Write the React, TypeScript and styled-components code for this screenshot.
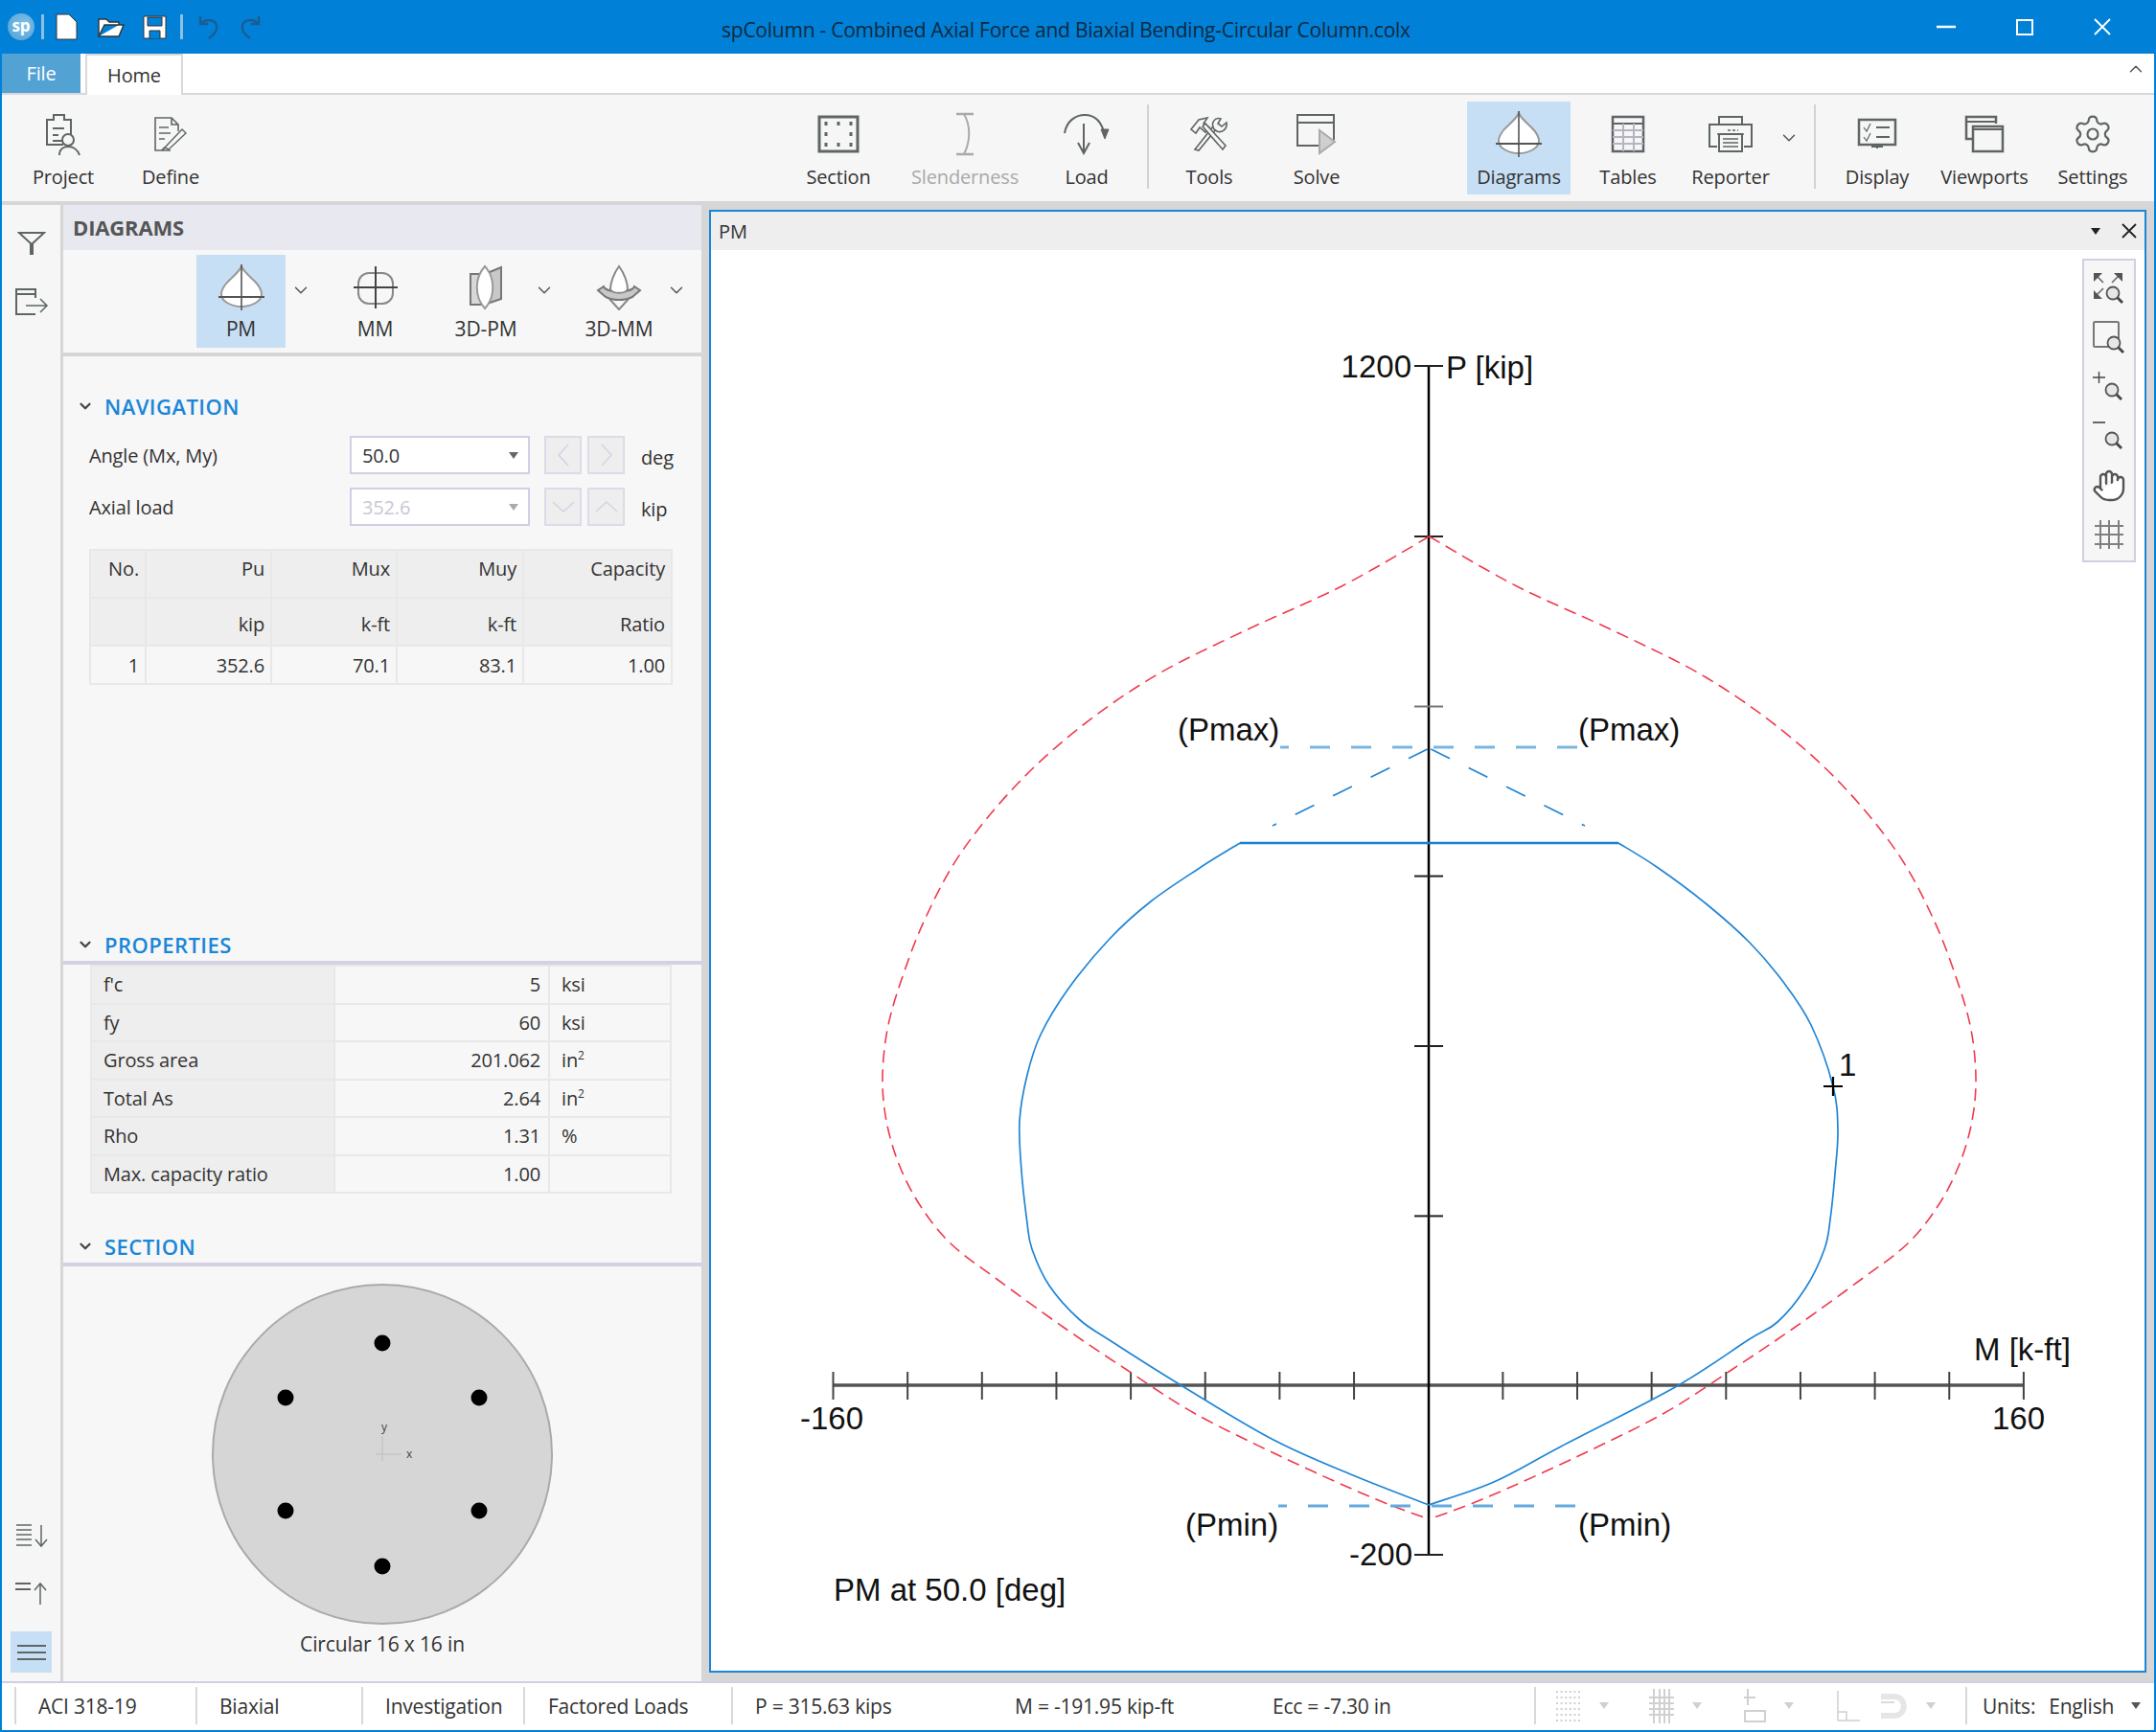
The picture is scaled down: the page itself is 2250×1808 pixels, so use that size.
import styled, { createGlobalStyle } from "styled-components";
import { ChevronDown, ChevronUp, Hand, Settings } from "lucide-react";
import type { ReactNode } from "react";

const GlobalStyle = createGlobalStyle`
  html, body { margin: 0; padding: 0; }
  body { font-family: "Open Sans", "Liberation Sans", sans-serif; color: #333; }
  * { box-sizing: border-box; }
`;

const Frame = styled.div`
  width: 2250px;
  height: 1808px;
  padding: 0 2px 2px;
  background: #0080d7;
  display: flex;
  flex-direction: column;
  overflow: hidden;
  font-size: 20px;
  letter-spacing: -0.15px;
`;

const TitleBar = styled.div`
  height: 56px;
  flex: none;
  display: flex;
  align-items: center;
  background: #0080d7;
`;

const Logo = styled.div`
  width: 28px;
  height: 28px;
  margin-left: 6px;
  border-radius: 50%;
  background: radial-gradient(circle at 60% 40%, #7fc0e8, #4f9fd4);
  color: #fff;
  font-weight: 700;
  font-size: 17px;
  line-height: 26px;
  text-align: center;
`;

const QatSep = styled.div`
  width: 3px;
  height: 26px;
  background: #8fbfe0;
  margin-left: ${(p: { $ml: number }) => p.$ml}px;
`;

const QatIcon = styled.svg<{ $ml: number }>`
  margin-left: ${(p) => p.$ml}px;
  flex: none;
`;

const Title = styled.div`
  margin-left: 480px;
  padding-top: 5px;
  font-size: 21px;
  letter-spacing: -0.24px;
  color: #0e2a40;
  white-space: nowrap;
`;

const WinButtons = styled.div`
  margin-left: auto;
  display: flex;
  align-items: center;
  margin-right: 45px;
  gap: 63px;
`;

const TabRow = styled.div`
  height: 43px;
  flex: none;
  display: flex;
  align-items: flex-start;
  background: #fff;
  border-bottom: 2px solid #d8d8d8;
`;

const FileTab = styled.div`
  width: 82px;
  height: 41px;
  background: #52a2d3;
  color: #fff;
  text-align: center;
  line-height: 41px;
`;

const HomeTab = styled.div`
  width: 102px;
  height: 43px;
  margin-left: 5px;
  background: #fff;
  border: 2px solid #d8d8d8;
  border-bottom: none;
  text-align: center;
  line-height: 41px;
`;

const CollapseBtn = styled.div`
  margin-left: auto;
  margin-right: 8px;
  margin-top: 5px;
  color: #555;
`;

const Ribbon = styled.div`
  height: 111px;
  flex: none;
  display: flex;
  align-items: flex-start;
  padding-top: 7px;
  background: #f6f6f6;
`;

const RibbonBtn = styled.div<{ $w: number; $ml: number; $active?: boolean; $off?: boolean }>`
  width: ${(p) => p.$w}px;
  height: 97px;
  margin-left: ${(p) => p.$ml}px;
  flex: none;
  display: flex;
  flex-direction: column;
  align-items: center;
  background: ${(p) => (p.$active ? "#c7dff5" : "transparent")};
  color: ${(p) => (p.$off ? "#a9a9a9" : "#333")};
`;

const IconBox = styled.div`
  height: 54px;
  margin-top: 7px;
  display: flex;
  align-items: center;
  justify-content: center;
`;

const RibbonLabel = styled.div`
  margin-top: 4px;
  line-height: 28px;
  white-space: nowrap;
`;

const RibbonChevron = styled.div<{ $ml: number }>`
  margin-left: ${(p) => p.$ml}px;
  margin-top: 27px;
  color: #555;
  flex: none;
  display: flex;
`;

const RibbonSep = styled.div<{ $ml: number }>`
  width: 2px;
  height: 88px;
  margin-top: 3px;
  margin-left: ${(p) => p.$ml}px;
  background: #d2d2d2;
  flex: none;
`;

const Body = styled.div`
  flex: 1;
  min-height: 0;
  display: flex;
  background: #d6d6d6;
  padding-top: 4px;
`;

const Rail = styled.div`
  width: 61px;
  margin-right: 3px;
  background: #f6f6f6;
  display: flex;
  flex-direction: column;
  align-items: center;
  padding: 18px 0 9px;
  gap: 18px;
`;

const RailBtn = styled.div<{ $active?: boolean; $bottom?: boolean }>`
  width: 43px;
  height: 43px;
  display: flex;
  align-items: center;
  justify-content: center;
  background: ${(p) => (p.$active ? "#c7dff5" : "transparent")};
  margin-top: ${(p) => (p.$bottom ? "auto" : "0")};
`;

const Panel = styled.div`
  width: 666px;
  flex: none;
  display: flex;
  flex-direction: column;
  background: #f7f7f7;
`;

const PanelHead = styled.div`
  height: 47px;
  padding-left: 10px;
  line-height: 47px;
  background: #e7e8f0;
  color: #555;
  font-size: 22px;
  font-weight: 700;
  flex: none;
`;

const DiagramStrip = styled.div`
  height: 111px;
  flex: none;
  padding-top: 5px;
  display: flex;
  align-items: flex-start;
  border-bottom: 4px solid #d6d6d6;
`;

const DiagramBtn = styled.div<{ $w: number; $ml: number; $active?: boolean }>`
  width: ${(p) => p.$w}px;
  height: 97px;
  margin-left: ${(p) => p.$ml}px;
  flex: none;
  display: flex;
  flex-direction: column;
  align-items: center;
  background: ${(p) => (p.$active ? "#c7dff5" : "transparent")};
`;

const DiagramIconBox = styled.div`
  height: 54px;
  margin-top: 7px;
  display: flex;
  align-items: center;
  justify-content: center;
`;

const DiagramLabel = styled.div`
  margin-top: 2px;
  font-size: 21px;
  line-height: 28px;
  white-space: nowrap;
`;

const StripChevron = styled.div<{ $ml: number }>`
  margin-left: ${(p) => p.$ml}px;
  margin-top: 26px;
  color: #555;
  flex: none;
  display: flex;
`;

const SectionHead = styled.div<{ $line?: boolean }>`
  height: ${(p) => (p.$line ? 44 : 38)}px;
  flex: none;
  display: flex;
  align-items: center;
  padding-left: 14px;
  padding-top: ${(p) => (p.$line ? 6 : 0)}px;
  border-bottom: ${(p) => (p.$line ? "4px solid #d3d2e2" : "none")};
  color: #1a86d8;
  font-size: 22px;
  font-weight: 600;
  letter-spacing: 0.45px;
`;

const SectionName = styled.span`
  margin-left: 11px;
`;

const NavBody = styled.div`
  flex: 1;
  min-height: 0;
  padding-top: 33px;
`;

const FieldRow = styled.div<{ $mt: number }>`
  display: flex;
  align-items: center;
  height: 40px;
  margin-top: ${(p) => p.$mt}px;
  padding-left: 27px;
`;

const FieldLabel = styled.div`
  width: 272px;
  flex: none;
`;

const Combo = styled.div<{ $off?: boolean }>`
  width: 188px;
  height: 40px;
  padding: 0 10px 0 11px;
  display: flex;
  align-items: center;
  justify-content: space-between;
  background: #fff;
  border: 2px solid #d0cfe4;
  color: ${(p) => (p.$off ? "#c8c8d4" : "#333")};
`;

const Caret = styled.span<{ $color?: string }>`
  width: 0;
  height: 0;
  border-left: 5px solid transparent;
  border-right: 5px solid transparent;
  border-top: 7px solid ${(p) => p.$color ?? "#666"};
`;

const StepBtn = styled.div<{ $ml: number }>`
  width: 39px;
  height: 40px;
  margin-left: ${(p) => p.$ml}px;
  background: #eeeeee;
  border: 2px solid #dcdbe8;
  display: flex;
  align-items: center;
  justify-content: center;
  color: #d3d3e3;
`;

const Unit = styled.div`
  margin-left: 17px;
  padding-top: 5px;
`;

const ResultTable = styled.table`
  margin: 24px 0 0 27px;
  width: 607px;
  table-layout: fixed;
  border-collapse: collapse;
  font-size: 20px;
`;

const TCell = styled.td<{ $w?: number; $head?: boolean; $pt?: number; $pb?: number }>`
  ${(p) => (p.$w ? `width: ${p.$w}px;` : "")}
  border: 2px solid #e8e8e8;
  background: ${(p) => (p.$head ? "#eeeeee" : "#f7f7f7")};
  text-align: right;
  padding: ${(p) => p.$pt ?? 0}px 6px ${(p) => p.$pb ?? 0}px 0;
`;

const HeadRow = styled.tr`
  height: 50px;
`;

const DataRow = styled.tr`
  height: 40px;
`;

const PropTable = styled.table`
  margin-left: 28px;
  width: 607px;
  table-layout: fixed;
  border-collapse: collapse;
  flex: none;
`;

const PropRow = styled.tr`
  height: 39.5px;
`;

const PropLabel = styled.td`
  width: 254px;
  padding-left: 12px;
  background: #eeeeee;
  border: 2px solid #e8e8e8;
  border-right: none;
`;

const PropValue = styled.td`
  width: 224px;
  padding-right: 8px;
  text-align: right;
  border: 2px solid #e8e8e8;
`;

const PropUnit = styled.td`
  padding-left: 12px;
  border: 2px solid #e8e8e8;
`;

const Sup = styled.sup`
  font-size: 12px;
  line-height: 0;
`;

const SectionGap = styled.div`
  height: 32px;
  flex: none;
`;

const SectionBody = styled.div`
  height: 433px;
  flex: none;
  display: flex;
  flex-direction: column;
  align-items: center;
  padding-top: 17px;
`;

const Caption = styled.div`
  margin-top: 3px;
  font-size: 21px;
  line-height: 28px;
  white-space: nowrap;
`;

const Main = styled.div`
  width: 1500px;
  flex: none;
  margin: 5px 0 9px 8px;
  display: flex;
  flex-direction: column;
  border: 2px solid #1a86d8;
  background: #fff;
`;

const MainHead = styled.div`
  height: 40px;
  flex: none;
  display: flex;
  align-items: center;
  padding: 0 8px;
  background: #eeeeee;
`;

const MainCaret = styled.span`
  margin-left: auto;
  margin-right: 22px;
  display: flex;
`;

const Canvas = styled.div`
  position: relative;
  flex: 1;
  min-height: 0;
`;

const ChartSvg = styled.svg`
  display: block;
`;

const ChartText = styled.text`
  font-family: "Liberation Sans", Arial, sans-serif;
  font-size: 33px;
  letter-spacing: 0;
  fill: #111;
  dominant-baseline: central;
`;

const ViewTools = styled.div`
  position: absolute;
  top: 9px;
  right: 9px;
  width: 56px;
  height: 317px;
  display: flex;
  flex-direction: column;
  align-items: center;
  padding-top: 3px;
  background: #f6f6f6;
  border: 2px solid #d0cfe4;
`;

const ViewToolBtn = styled.div`
  height: 51.5px;
  display: flex;
  align-items: center;
  justify-content: center;
  flex: none;
`;

const StatusBar = styled.div`
  height: 51px;
  flex: none;
  padding: 4px 0 6px 13px;
  display: flex;
  background: #fff;
  border-top: 2px solid #d0cfe4;
  font-size: 21px;
  letter-spacing: -0.22px;
`;

const StatusCell = styled.div<{ $w?: number; $pl?: number }>`
  ${(p) => (p.$w ? `width: ${p.$w}px; flex: none;` : "flex: 1;")}
  padding-left: ${(p) => p.$pl ?? 0}px;
  display: flex;
  align-items: center;
  border-left: 2px solid #d8d8d8;
  white-space: nowrap;
`;

const Metric = styled.div<{ $w: number }>`
  width: ${(p) => p.$w}px;
  flex: none;
`;

const StatusIcon = styled.div<{ $ml: number }>`
  margin-left: ${(p) => p.$ml}px;
  flex: none;
  display: flex;
  align-items: center;
`;

const UnitsValue = styled.span`
  margin-left: 14px;
`;

const UnitsCaret = styled.span`
  margin-left: 18px;
  display: flex;
`;

const GREY = "#5f6565";

function Ico({ w, h, children }: { w: number; h: number; children: ReactNode }) {
  return (
    <svg width={w} height={h} viewBox={`0 0 ${w} ${h}`} fill="none" stroke={GREY} strokeWidth={2}>
      {children}
    </svg>
  );
}

function TearDrop() {
  return (
    <Ico w={50} h={50}>
      <path d="M25 3C28 10 36 15 41 21C45 26 46 29 46 32C46 40 35 45 25 45C15 45 4 40 4 32C4 29 5 26 9 21C14 15 22 10 25 3Z" fill="#fff" stroke="#999" />
      <path d="M25 1V49" strokeWidth={1.6} stroke="#555" />
      <path d="M1 35H49" stroke="#555" />
    </Ico>
  );
}

function ProjectIcon() {
  return (
    <Ico w={38} h={46}>
      <path d="M19 34H2V8H9V3H20V8H27V23" />
      <path d="M8 17H20M8 24H14M8 30H18" />
      <circle cx="24" cy="29" r="6" />
      <path d="M15 45C15 39 19 36 24 36S34 39 36 45" />
    </Ico>
  );
}

function DefineIcon() {
  return (
    <Ico w={36} h={38}>
      <path d="M18 36H2V2H19L26 9V16M19 2V9H26" strokeWidth={1.6} />
      <path d="M6 12H16M6 18H18M6 24H12" strokeWidth={1.4} />
      <path d="M12 33L30 14L34 18L16 35Z" strokeWidth={1.4} />
      <path d="M12 33L9 36" />
    </Ico>
  );
}

function SectionIcon() {
  return (
    <Ico w={44} h={40}>
      <rect x="2" y="2" width="40" height="36" strokeWidth={3} />
      {[9, 22, 35].map((x) => [9, 20, 31].map((y) => (x === 22 && y === 20 ? null : <rect key={`${x}${y}`} x={x - 1.5} y={y - 2} width="3" height="4" fill={GREY} stroke="none" />)))}
    </Ico>
  );
}

function SlendernessIcon() {
  return (
    <Ico w={24} h={46}>
      <path d="M3 2H21M3 44H21" stroke="#aaa" strokeWidth={2.5} />
      <path d="M11 2C18 14 18 30 11 44" stroke="#aaa" />
    </Ico>
  );
}

function LoadIcon() {
  return (
    <Ico w={50} h={44}>
      <path d="M2 21C4 8 14 2 23 2C33 2 41 8 44 24" />
      <path d="M40 17L44 27L48 17Z" fill={GREY} strokeWidth={1} />
      <path d="M22 11V40M16 31L22 42L28 31" />
    </Ico>
  );
}

function ToolsIcon() {
  return (
    <Ico w={40} h={36}>
      <path d="M5 34L24 10L27 13L9 35Z" strokeWidth={1.6} />
      <path d="M1 13L9 3L18 1L14 7L20 11L16 16L10 11L6 17Z" fill="#f6f6f6" strokeWidth={1.6} />
      <path d="M34 34L13 10L16 7L37 30Z" fill="#f6f6f6" strokeWidth={1.6} />
      <path d="M25 13C21 6 26 0 32 2L29 7L33 10L38 6C39 13 33 17 28 15Z" fill="#f6f6f6" strokeWidth={1.6} />
    </Ico>
  );
}

function SolveIcon() {
  return (
    <Ico w={44} h={44}>
      <path d="M24 34H2V2H40V28M2 10H40" />
      <path d="M25 18L41 30L25 42Z" fill="#cfcfcf" stroke="#aaa" />
    </Ico>
  );
}

function TablesIcon() {
  return (
    <Ico w={36} h={40}>
      <rect x="2" y="2" width="32" height="36" strokeWidth={2.5} />
      <path d="M2 9H34" />
      <path d="M2 16H34M2 23H34M2 30H34M13 9V38M24 9V38" stroke="#b5b5c2" strokeWidth={2} />
    </Ico>
  );
}

function ReporterIcon() {
  return (
    <Ico w={48} h={40}>
      <path d="M12 10V2H36V10" />
      <path d="M10 33H2V10H46V33H38" />
      <path d="M10 20H38" strokeWidth={1.4} />
      <path d="M12 20H36V38H12Z" fill="#f6f6f6" />
      <path d="M16 25H32M16 29H32M16 33H32" strokeWidth={1.4} />
      <path d="M21 16H32" strokeDasharray="3 2" strokeWidth={1.6} />
    </Ico>
  );
}

function DisplayIcon() {
  return (
    <Ico w={42} h={34}>
      <rect x="2" y="2" width="38" height="26" strokeWidth={2.5} />
      <path d="M15 30H27M21 28V32" />
      <path d="M7 10L10 14L14 6M7 20L10 24L14 16" strokeWidth={1.2} />
      <path d="M20 10H34M20 20H34" strokeWidth={1.8} />
    </Ico>
  );
}

function ViewportsIcon() {
  return (
    <Ico w={42} h={40}>
      <path d="M9 25H2V2H33V9" strokeWidth={2.5} />
      <path d="M2 7H33" />
      <rect x="9" y="12" width="31" height="26" strokeWidth={2.5} fill="#f6f6f6" />
      <path d="M9 15H40" />
    </Ico>
  );
}

function MmIcon() {
  return (
    <Ico w={50} h={46}>
      <rect x="7" y="8" width="36" height="32" rx="11" stroke="#888" />
      <path d="M25 1V45M2 23H48" stroke="#444" />
    </Ico>
  );
}

function Pm3dIcon() {
  return (
    <Ico w={36} h={48}>
      <path d="M2 10H14V42H2Z" fill="#d8d8d8" stroke="#777" />
      <path d="M22 8L34 3V36L22 40Z" fill="#c8c8c8" stroke="#777" />
      <path d="M17 2C28 14 28 34 17 46C6 34 6 14 17 2Z" fill="#fff" stroke="#999" />
    </Ico>
  );
}

function Mm3dIcon() {
  return (
    <Ico w={48} h={48}>
      <path d="M14 36L24 47L34 36" stroke="#888" />
      <path d="M8 23L2 27L10 34C18 38 30 38 38 34L46 27L40 23C38 30 10 30 8 23Z" fill="#c8c8c8" stroke="#777" />
      <path d="M24 2C30 10 33 20 33 26C31 31 17 31 15 26C15 20 18 10 24 2Z" fill="#fff" stroke="#888" />
    </Ico>
  );
}

function FunnelIcon() {
  return (
    <Ico w={30} h={26}>
      <path d="M2 2H28L15 14Z" fill="#f6f6f6" />
      <path d="M15 13V25" strokeWidth={4} />
    </Ico>
  );
}

function ExportIcon() {
  return (
    <Ico w={36} h={30}>
      <path d="M22 28H2V2H22V11M2 7H22" />
      <path d="M12 19H34M27 12L34 19L27 26" strokeWidth={1.5} />
    </Ico>
  );
}

function ListDownIcon() {
  return (
    <Ico w={34} h={26}>
      <path d="M1 2H17M1 7H17M1 12H17M1 17H17M1 23H17" strokeWidth={1.6} />
      <path d="M27 2V23M21 17L27 24L33 17" strokeWidth={1.5} />
    </Ico>
  );
}

function ListUpIcon() {
  return (
    <Ico w={36} h={26}>
      <path d="M1 2H17M1 8H17" strokeWidth={1.8} />
      <path d="M27 24V2M21 9L27 2L33 9" strokeWidth={1.5} />
    </Ico>
  );
}

function MenuIcon() {
  return (
    <Ico w={30} h={18}>
      <path d="M0 2H30M0 9H30M0 16H30" />
    </Ico>
  );
}

function Magnifier({ x, y }: { x: number; y: number }) {
  return (
    <g>
      <circle cx={x} cy={y} r="6.5" fill="#e6e6e6" stroke="#555" strokeWidth={1.8} />
      <path d={`M${x + 4.5} ${y + 4.5}L${x + 10} ${y + 10}`} stroke="#444" strokeWidth={2.8} />
    </g>
  );
}

function FitIcon() {
  return (
    <Ico w={36} h={36}>
      <path d="M3 3L12 12M21 12L30 3M3 27L12 18" strokeWidth={1.5} />
      <path d="M2 2H11L2 11ZM32 2V11L23 2ZM2 29V20L11 29Z" fill="#555" stroke="none" />
      <Magnifier x={22} y={23} />
    </Ico>
  );
}

function WindowZoomIcon() {
  return (
    <Ico w={36} h={36}>
      <rect x="2" y="2" width="26" height="26" rx="1.5" stroke="#777" />
      <Magnifier x={23} y={24} />
    </Ico>
  );
}

function ZoomInIcon() {
  return (
    <Ico w={36} h={36}>
      <path d="M1 8H14M7.5 2V14" stroke="#444" strokeWidth={1.4} />
      <Magnifier x={21} y={21} />
    </Ico>
  );
}

function ZoomOutIcon() {
  return (
    <Ico w={36} h={36}>
      <path d="M1 4H14" stroke="#444" strokeWidth={1.6} />
      <Magnifier x={21} y={21} />
    </Ico>
  );
}

function GridIcon() {
  return (
    <Ico w={32} h={32}>
      <path d="M1 7H31M1 16H31M1 26H31M7 1V31M16 1V31M26 1V31" stroke="#808080" strokeWidth={2} />
    </Ico>
  );
}

const LIGHT = "#d0d0d0";

function DotsIcon() {
  const cells = [0, 1, 2, 3, 4, 5];
  return (
    <svg width={26} height={34} viewBox="0 0 26 34">
      {cells.map((r) => cells.map((c) => <rect key={`${r}-${c}`} x={c * 4.6 + 1} y={r * 6 + 1} width="2" height="2" fill={LIGHT} />))}
    </svg>
  );
}

function LightGridIcon() {
  return (
    <svg width={26} height={36} viewBox="0 0 26 36" fill="none" stroke={LIGHT} strokeWidth={2}>
      <path d="M0 9H26M0 15H26M0 21H26M0 27H26M5 0V36M11 0V36M16 0V36M21 0V36" />
    </svg>
  );
}

function PlusRectIcon() {
  return (
    <svg width={24} height={36} viewBox="0 0 24 36" fill="none" stroke={LIGHT} strokeWidth={2}>
      <path d="M4 0V17M0 9H12" />
      <rect x="1" y="23" width="21" height="11" />
    </svg>
  );
}

function SnapIcon() {
  return (
    <svg width={26} height={32} viewBox="0 0 26 32" fill="none" stroke={LIGHT} strokeWidth={1.5}>
      <path d="M2 0V31H25M2 22H11V31" />
    </svg>
  );
}

function MagnetIcon() {
  return (
    <svg width={28} height={32} viewBox="0 0 28 32" fill="none" stroke={LIGHT} strokeWidth={6}>
      <path d="M0 6H14C27 6 27 26 14 26H0" stroke="#e6e6e6" />
      <path d="M0 12H14" stroke={LIGHT} strokeWidth={1.5} />
    </svg>
  );
}

const smooth = (pts: number[][]) => {
  let d = `M${pts[0][0]} ${pts[0][1]}`;
  for (let i = 0; i < pts.length - 1; i++) {
    const p0 = pts[Math.max(i - 1, 0)];
    const p1 = pts[i];
    const p2 = pts[i + 1];
    const p3 = pts[Math.min(i + 2, pts.length - 1)];
    const c1 = [p1[0] + (p2[0] - p0[0]) / 6, p1[1] + (p2[1] - p0[1]) / 6];
    const c2 = [p2[0] - (p3[0] - p1[0]) / 6, p2[1] - (p3[1] - p1[1]) / 6];
    d += `C${c1[0].toFixed(1)} ${c1[1].toFixed(1)} ${c2[0].toFixed(1)} ${c2[1].toFixed(1)} ${p2[0]} ${p2[1]}`;
  }
  return d;
};

// kromma från pixlar i skärmbilden
const redLeft = [[1491.5, 560], [1400, 612], [1300, 658], [1208, 704], [1130, 757], [1062, 818], [1003, 890], [965, 960], [940, 1025], [926, 1075], [921, 1125], [925, 1170], [938, 1215], [960, 1258], [992, 1298], [1040, 1335], [1112, 1387], [1176, 1430], [1246, 1475], [1336, 1520], [1431, 1563], [1491.5, 1586]];
const redRight = redLeft.map(([x, y]) => [2983 - x, y]);

const blueLeft = [[1294, 880], [1252, 906], [1201, 941], [1158, 980], [1115, 1032], [1086, 1080], [1072, 1122], [1064, 1170], [1066, 1222], [1072, 1277], [1077, 1304], [1095, 1342], [1126, 1377], [1158, 1399], [1234, 1447], [1329, 1503], [1412, 1540], [1491, 1571]];
const blueRight = [[1689, 880], [1729, 905], [1780, 943], [1826, 984], [1861, 1025], [1890, 1070], [1913, 1134], [1918, 1180], [1915, 1225], [1910, 1273], [1904, 1304], [1884, 1345], [1855, 1380], [1824, 1399], [1750, 1447], [1629, 1510], [1559, 1547], [1491, 1571]];

const hTicks = Array.from({ length: 17 }, (_, i) => 869.5 + i * 77.65).filter((_, i) => i !== 8);
const vTicks = [382, 560, 737.5, 914.6, 1092, 1269.4, 1623];

function Chart() {
  return (
    <ChartSvg width={1496} height={1484} viewBox="742 261 1496 1484" fill="none">
      <path d="M869.5 1446H2112" stroke="#555" strokeWidth={3.5} />
      {hTicks.map((x) => (
        <path key={x} d={`M${x} 1432V1461`} stroke="#444" strokeWidth={2} />
      ))}
      <path d="M1491 382V1623" stroke="#000" strokeWidth={2.5} />
      {vTicks.map((y) => (
        <path key={y} d={`M1476 ${y}H1506`} stroke={y === 737.5 ? "#777" : "#222"} strokeWidth={2} />
      ))}
      <path d={smooth(redLeft)} stroke="#f0394d" strokeWidth={1.6} strokeDasharray="13 7" />
      <path d={smooth(redRight)} stroke="#f0394d" strokeWidth={1.6} strokeDasharray="13 7" />
      <path d="M1336 780H1647" stroke="#7ab5e2" strokeWidth={3} strokeDasharray="21 22" strokeDashoffset={12} />
      <path d="M1334 1572H1646" stroke="#64aadd" strokeWidth={3} strokeDasharray="21 22" strokeDashoffset={12} />
      <path d="M1491.5 781L1328 862" stroke="#1f85d6" strokeWidth={1.7} strokeDasharray="22 22" strokeDashoffset={-2} />
      <path d="M1491.5 781L1654 862" stroke="#1f85d6" strokeWidth={1.7} strokeDasharray="22 22" strokeDashoffset={-2} />
      <path d="M1294 880H1689" stroke="#1b80cf" strokeWidth={2.4} />
      <path d={smooth(blueLeft)} stroke="#1f85d6" strokeWidth={1.7} />
      <path d={smooth(blueRight)} stroke="#1f85d6" strokeWidth={1.7} />
      <path d="M1903 1134H1923M1913 1124V1144" stroke="#000" strokeWidth={2.2} />
      <ChartText x={1473} y={382} textAnchor="end">1200</ChartText>
      <ChartText x={1509} y={383}>P [kip]</ChartText>
      <ChartText x={2060} y={1408}>M [k-ft]</ChartText>
      <ChartText x={835} y={1480}>-160</ChartText>
      <ChartText x={2079} y={1480}>160</ChartText>
      <ChartText x={1229} y={761}>(Pmax)</ChartText>
      <ChartText x={1647} y={761}>(Pmax)</ChartText>
      <ChartText x={1237} y={1591}>(Pmin)</ChartText>
      <ChartText x={1647} y={1591}>(Pmin)</ChartText>
      <ChartText x={1474} y={1622} textAnchor="end">-200</ChartText>
      <ChartText x={870} y={1659}>PM at 50.0 [deg]</ChartText>
      <ChartText x={1919} y={1111}>1</ChartText>
    </ChartSvg>
  );
}

function SectionDrawing() {
  const bars = [[180, 63], [79, 120], [281, 120], [79, 238], [281, 238], [180, 296]];
  return (
    <svg width={360} height={360} viewBox="0 0 360 360">
      <circle cx="180" cy="179" r="177" fill="#d6d6d6" stroke="#aaa" strokeWidth={2} />
      {bars.map(([x, y]) => (
        <circle key={`${x}-${y}`} cx={x} cy={y} r="8.5" fill="#000" />
      ))}
      <path d="M180 160V186M173 179H200" stroke="#c9c3c6" strokeWidth={1.5} />
      <text x="182" y="155" fontSize="12" textAnchor="middle" fill="#444">y</text>
      <text x="208" y="183" fontSize="12" textAnchor="middle" fill="#444">x</text>
    </svg>
  );
}

export default function App() {
  return (
    <Frame>
      <GlobalStyle />
      <TitleBar>
        <Logo>sp</Logo>
        <QatSep $ml={7} />
        <QatIcon $ml={12} width={23} height={28} viewBox="0 0 23 28">
          <path d="M1 1H14L22 9V27H1Z" fill="#fff" stroke="#333" />
        </QatIcon>
        <QatIcon $ml={21} width={28} height={21} viewBox="0 0 28 21">
          <path d="M1 20V2H9L12 5H22V8H7L1 20H22L27 8H22" fill="#fff" stroke="#333" strokeWidth={1.4} />
        </QatIcon>
        <QatIcon $ml={19} width={25} height={25} viewBox="0 0 25 25">
          <path d="M1 1H24V24H1Z" fill="#fff" stroke="#333" />
          <path d="M5 2H20V11H5ZM7 24V16H18V24" fill="#0080d7" stroke="#333" />
        </QatIcon>
        <QatSep $ml={14} />
        <QatIcon $ml={15} width={22} height={26} viewBox="0 0 22 26" fill="none" stroke="#1b5d92" strokeWidth={2.4}>
          <path d="M3 2V10H11M3 10C10 3 21 6 20 14C20 19 15 23 12 25" />
        </QatIcon>
        <QatIcon $ml={23} width={22} height={26} viewBox="0 0 22 26" fill="none" stroke="#1b5d92" strokeWidth={2.4}>
          <path d="M19 2V10H11M19 10C12 3 1 6 2 14C2 19 7 23 10 25" />
        </QatIcon>
        <Title>spColumn - Combined Axial Force and Biaxial Bending-Circular Column.colx</Title>
        <WinButtons>
          <svg width={20} height={4} viewBox="0 0 20 4"><path d="M0 2H20" stroke="#fff" strokeWidth={2.5} /></svg>
          <svg width={18} height={17} viewBox="0 0 18 17"><rect x="1" y="1" width="16" height="15" fill="none" stroke="#fff" strokeWidth={2} /></svg>
          <svg width={18} height={18} viewBox="0 0 18 18"><path d="M1 1L17 17M17 1L1 17" stroke="#fff" strokeWidth={1.8} /></svg>
        </WinButtons>
      </TitleBar>

      <TabRow>
        <FileTab>File</FileTab>
        <HomeTab>Home</HomeTab>
        <CollapseBtn><ChevronUp size={22} strokeWidth={1.6} /></CollapseBtn>
      </TabRow>

      <Ribbon>
        <RibbonBtn $w={108} $ml={10}><IconBox><ProjectIcon /></IconBox><RibbonLabel>Project</RibbonLabel></RibbonBtn>
        <RibbonBtn $w={108} $ml={4}><IconBox><DefineIcon /></IconBox><RibbonLabel>Define</RibbonLabel></RibbonBtn>
        <RibbonBtn $w={110} $ml={588}><IconBox><SectionIcon /></IconBox><RibbonLabel>Section</RibbonLabel></RibbonBtn>
        <RibbonBtn $w={140} $ml={7} $off><IconBox><SlendernessIcon /></IconBox><RibbonLabel>Slenderness</RibbonLabel></RibbonBtn>
        <RibbonBtn $w={100} $ml={7}><IconBox><LoadIcon /></IconBox><RibbonLabel>Load</RibbonLabel></RibbonBtn>
        <RibbonSep $ml={13} />
        <RibbonBtn $w={100} $ml={13}><IconBox><ToolsIcon /></IconBox><RibbonLabel>Tools</RibbonLabel></RibbonBtn>
        <RibbonBtn $w={100} $ml={12}><IconBox><SolveIcon /></IconBox><RibbonLabel>Solve</RibbonLabel></RibbonBtn>
        <RibbonBtn $w={108} $ml={107} $active><IconBox><TearDrop /></IconBox><RibbonLabel>Diagrams</RibbonLabel></RibbonBtn>
        <RibbonBtn $w={100} $ml={10}><IconBox><TablesIcon /></IconBox><RibbonLabel>Tables</RibbonLabel></RibbonBtn>
        <RibbonBtn $w={100} $ml={7}><IconBox><ReporterIcon /></IconBox><RibbonLabel>Reporter</RibbonLabel></RibbonBtn>
        <RibbonChevron $ml={0}><ChevronDown size={22} strokeWidth={1.6} /></RibbonChevron>
        <RibbonSep $ml={15} />
        <RibbonBtn $w={110} $ml={9}><IconBox><DisplayIcon /></IconBox><RibbonLabel>Display</RibbonLabel></RibbonBtn>
        <RibbonBtn $w={110} $ml={2}><IconBox><ViewportsIcon /></IconBox><RibbonLabel>Viewports</RibbonLabel></RibbonBtn>
        <RibbonBtn $w={110} $ml={3}><IconBox><Settings size={44} strokeWidth={1.2} color={GREY} /></IconBox><RibbonLabel>Settings</RibbonLabel></RibbonBtn>
      </Ribbon>

      <Body>
        <Rail>
          <RailBtn><FunnelIcon /></RailBtn>
          <RailBtn><ExportIcon /></RailBtn>
          <RailBtn $bottom><ListDownIcon /></RailBtn>
          <RailBtn><ListUpIcon /></RailBtn>
          <RailBtn $active><MenuIcon /></RailBtn>
        </Rail>

        <Panel>
          <PanelHead>DIAGRAMS</PanelHead>
          <DiagramStrip>
            <DiagramBtn $w={93} $ml={139} $active><DiagramIconBox><TearDrop /></DiagramIconBox><DiagramLabel>PM</DiagramLabel></DiagramBtn>
            <StripChevron $ml={5}><ChevronDown size={22} strokeWidth={1.6} /></StripChevron>
            <DiagramBtn $w={93} $ml={20}><DiagramIconBox><MmIcon /></DiagramIconBox><DiagramLabel>MM</DiagramLabel></DiagramBtn>
            <DiagramBtn $w={100} $ml={19}><DiagramIconBox><Pm3dIcon /></DiagramIconBox><DiagramLabel>3D-PM</DiagramLabel></DiagramBtn>
            <StripChevron $ml={0}><ChevronDown size={22} strokeWidth={1.6} /></StripChevron>
            <DiagramBtn $w={100} $ml={17}><DiagramIconBox><Mm3dIcon /></DiagramIconBox><DiagramLabel>3D-MM</DiagramLabel></DiagramBtn>
            <StripChevron $ml={-1}><ChevronDown size={22} strokeWidth={1.6} /></StripChevron>
          </DiagramStrip>

          <NavBody>
            <SectionHead><ChevronDown size={18} strokeWidth={3} color="#444" /><SectionName>NAVIGATION</SectionName></SectionHead>
            <FieldRow $mt={12}>
              <FieldLabel>Angle (Mx, My)</FieldLabel>
              <Combo>50.0<Caret /></Combo>
              <StepBtn $ml={15}><svg width={14} height={24} viewBox="0 0 14 24"><path d="M12 1L2 12L12 23" fill="none" stroke="currentColor" strokeWidth={1.5} /></svg></StepBtn>
              <StepBtn $ml={6}><svg width={14} height={24} viewBox="0 0 14 24"><path d="M2 1L12 12L2 23" fill="none" stroke="currentColor" strokeWidth={1.5} /></svg></StepBtn>
              <Unit>deg</Unit>
            </FieldRow>
            <FieldRow $mt={14}>
              <FieldLabel>Axial load</FieldLabel>
              <Combo $off>352.6<Caret $color="#aaa" /></Combo>
              <StepBtn $ml={15}><svg width={24} height={14} viewBox="0 0 24 14"><path d="M1 2L12 12L23 2" fill="none" stroke="currentColor" strokeWidth={1.5} /></svg></StepBtn>
              <StepBtn $ml={6}><svg width={24} height={14} viewBox="0 0 24 14"><path d="M1 12L12 2L23 12" fill="none" stroke="currentColor" strokeWidth={1.5} /></svg></StepBtn>
              <Unit>kip</Unit>
            </FieldRow>
            <ResultTable>
              <tbody>
                <HeadRow>
                  <TCell $w={58} $head $pb={12}>No.</TCell>
                  <TCell $w={131} $head $pb={12}>Pu</TCell>
                  <TCell $w={131} $head $pb={12}>Mux</TCell>
                  <TCell $w={132} $head $pb={12}>Muy</TCell>
                  <TCell $w={155} $head $pb={12}>Capacity</TCell>
                </HeadRow>
                <HeadRow>
                  <TCell $head $pt={5}></TCell>
                  <TCell $head $pt={5}>kip</TCell>
                  <TCell $head $pt={5}>k-ft</TCell>
                  <TCell $head $pt={5}>k-ft</TCell>
                  <TCell $head $pt={5}>Ratio</TCell>
                </HeadRow>
                <DataRow>
                  <TCell>1</TCell>
                  <TCell>352.6</TCell>
                  <TCell>70.1</TCell>
                  <TCell>83.1</TCell>
                  <TCell>1.00</TCell>
                </DataRow>
              </tbody>
            </ResultTable>
          </NavBody>

          <SectionHead $line><ChevronDown size={18} strokeWidth={3} color="#444" /><SectionName>PROPERTIES</SectionName></SectionHead>
          <PropTable>
            <tbody>
              <PropRow><PropLabel>f'c</PropLabel><PropValue>5</PropValue><PropUnit>ksi</PropUnit></PropRow>
              <PropRow><PropLabel>fy</PropLabel><PropValue>60</PropValue><PropUnit>ksi</PropUnit></PropRow>
              <PropRow><PropLabel>Gross area</PropLabel><PropValue>201.062</PropValue><PropUnit>in<Sup>2</Sup></PropUnit></PropRow>
              <PropRow><PropLabel>Total As</PropLabel><PropValue>2.64</PropValue><PropUnit>in<Sup>2</Sup></PropUnit></PropRow>
              <PropRow><PropLabel>Rho</PropLabel><PropValue>1.31</PropValue><PropUnit>%</PropUnit></PropRow>
              <PropRow><PropLabel>Max. capacity ratio</PropLabel><PropValue>1.00</PropValue><PropUnit></PropUnit></PropRow>
            </tbody>
          </PropTable>
          <SectionGap />
          <SectionHead $line><ChevronDown size={18} strokeWidth={3} color="#444" /><SectionName>SECTION</SectionName></SectionHead>
          <SectionBody>
            <SectionDrawing />
            <Caption>Circular 16 x 16 in</Caption>
          </SectionBody>
        </Panel>

        <Main>
          <MainHead>
            PM
            <MainCaret><Caret $color="#222" /></MainCaret>
            <svg width={16} height={16} viewBox="0 0 16 16"><path d="M1 1L15 15M15 1L1 15" stroke="#222" strokeWidth={1.8} /></svg>
          </MainHead>
          <Canvas>
            <Chart />
            <ViewTools>
              <ViewToolBtn><FitIcon /></ViewToolBtn>
              <ViewToolBtn><WindowZoomIcon /></ViewToolBtn>
              <ViewToolBtn><ZoomInIcon /></ViewToolBtn>
              <ViewToolBtn><ZoomOutIcon /></ViewToolBtn>
              <ViewToolBtn><Hand size={36} strokeWidth={1.6} color="#555" fill="#fff" /></ViewToolBtn>
              <ViewToolBtn><GridIcon /></ViewToolBtn>
            </ViewTools>
          </Canvas>
        </Main>
      </Body>

      <StatusBar>
        <StatusCell $w={189} $pl={23}>ACI 318-19</StatusCell>
        <StatusCell $w={173} $pl={23}>Biaxial</StatusCell>
        <StatusCell $w={169} $pl={23}>Investigation</StatusCell>
        <StatusCell $w={217} $pl={24}>Factored Loads</StatusCell>
        <StatusCell $w={838} $pl={23}>
          <Metric $w={271}>P = 315.63 kips</Metric>
          <Metric $w={269}>M = -191.95 kip-ft</Metric>
          <Metric $w={200}>Ecc = -7.30 in</Metric>
        </StatusCell>
        <StatusCell $w={450}>
          <StatusIcon $ml={20}><DotsIcon /></StatusIcon>
          <StatusIcon $ml={20}><Caret $color={LIGHT} /></StatusIcon>
          <StatusIcon $ml={42}><LightGridIcon /></StatusIcon>
          <StatusIcon $ml={19}><Caret $color={LIGHT} /></StatusIcon>
          <StatusIcon $ml={44}><PlusRectIcon /></StatusIcon>
          <StatusIcon $ml={18}><Caret $color={LIGHT} /></StatusIcon>
          <StatusIcon $ml={44}><SnapIcon /></StatusIcon>
          <StatusIcon $ml={21}><MagnetIcon /></StatusIcon>
          <StatusIcon $ml={19}><Caret $color={LIGHT} /></StatusIcon>
        </StatusCell>
        <StatusCell $pl={16}>
          Units:<UnitsValue>English</UnitsValue>
          <UnitsCaret><Caret $color="#555" /></UnitsCaret>
        </StatusCell>
      </StatusBar>
    </Frame>
  );
}
